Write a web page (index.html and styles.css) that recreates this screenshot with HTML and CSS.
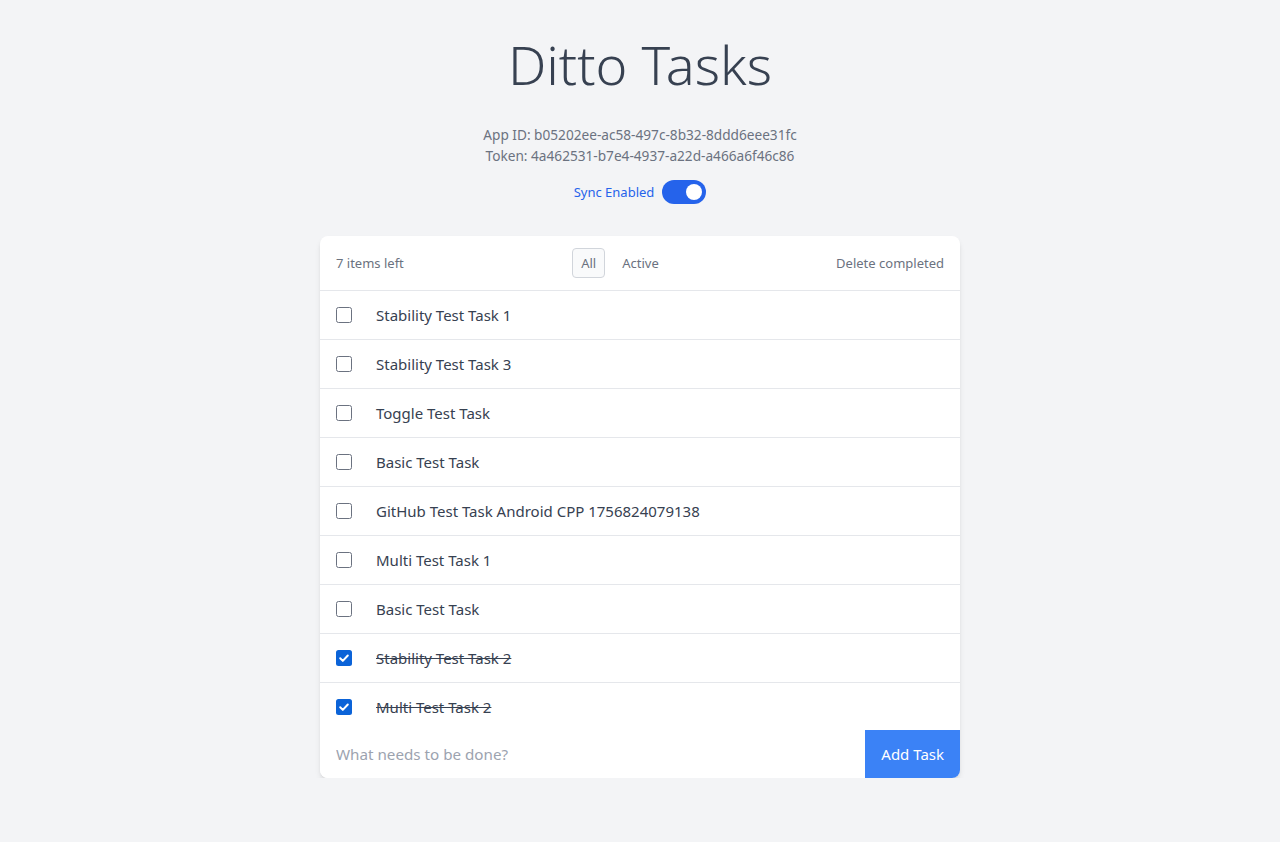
FILE: index.html
```html
<!DOCTYPE html>
<html lang="en">
<head>
<meta charset="utf-8">
<title>Ditto Tasks</title>
<link rel="stylesheet" href="styles.css">
</head>
<body>
<main class="page">
  <h1 class="title">Ditto Tasks</h1>
  <div class="creds">
    <div>App ID: b05202ee-ac58-497c-8b32-8ddd6eee31fc</div>
    <div>Token: 4a462531-b7e4-4937-a22d-a466a6f46c86</div>
  </div>
  <div class="sync">
    <span class="sync-label">Sync Enabled</span>
    <span class="toggle"><span class="knob"></span></span>
  </div>
  <section class="card">
    <header class="card-head">
      <span class="count">7 items left</span>
      <div class="filters">
        <button class="filter active">All</button>
        <button class="filter">Active</button>
      </div>
      <button class="clear">Delete completed</button>
    </header>
    <ul class="list">
      <li class="row"><span class="cb"></span><span class="label">Stability Test Task 1</span></li>
      <li class="row"><span class="cb"></span><span class="label">Stability Test Task 3</span></li>
      <li class="row"><span class="cb"></span><span class="label">Toggle Test Task</span></li>
      <li class="row"><span class="cb"></span><span class="label">Basic Test Task</span></li>
      <li class="row"><span class="cb"></span><span class="label">GitHub Test Task Android CPP 1756824079138</span></li>
      <li class="row"><span class="cb"></span><span class="label">Multi Test Task 1</span></li>
      <li class="row"><span class="cb"></span><span class="label">Basic Test Task</span></li>
      <li class="row done"><span class="cb checked"><svg viewBox="0 0 16 16" width="16" height="16"><path d="M4.2 8.3l2.6 2.6 5-5.4" fill="none" stroke="#fff" stroke-width="2" stroke-linecap="round" stroke-linejoin="round"/></svg></span><span class="label">Stability Test Task 2</span></li>
      <li class="row done"><span class="cb checked"><svg viewBox="0 0 16 16" width="16" height="16"><path d="M4.2 8.3l2.6 2.6 5-5.4" fill="none" stroke="#fff" stroke-width="2" stroke-linecap="round" stroke-linejoin="round"/></svg></span><span class="label">Multi Test Task 2</span></li>
    </ul>
    <form class="add">
      <input class="add-input" type="text" placeholder="What needs to be done?">
      <button class="add-btn" type="button">Add Task</button>
    </form>
  </section>
</main>
</body>
</html>
```

FILE: styles.css
```css
* { box-sizing: border-box; }
html, body { margin: 0; padding: 0; }
body {
  background: #f3f4f6;
  font-family: "Noto Sans", "Open Sans", sans-serif;
  color: #374151;
}
.page {
  display: flex;
  flex-direction: column;
  align-items: center;
  padding-top: 32px;
}
.title {
  margin: 0;
  font-size: 54px;
  line-height: 64px;
  font-weight: 300;
  color: #374151;
}
.creds {
  margin-top: 28px;
  font-size: 13.65px;
  line-height: 21px;
  color: #6b7280;
  text-align: center;
}
.sync {
  margin-top: 14px;
  display: flex;
  align-items: center;
  gap: 8px;
}
.sync-label {
  font-size: 13px;
  color: #2563eb;
}
.toggle {
  width: 44px;
  height: 24px;
  border-radius: 12px;
  background: #2563eb;
  display: flex;
  align-items: center;
  justify-content: flex-end;
  padding: 0 4px;
}
.knob {
  width: 16px;
  height: 16px;
  border-radius: 50%;
  background: #fff;
}
.card {
  margin-top: 32px;
  width: 640px;
  background: #fff;
  border-radius: 8px;
  box-shadow: 0 4px 6px -1px rgba(0,0,0,0.1), 0 2px 4px -2px rgba(0,0,0,0.1);
  overflow: hidden;
}
.card-head {
  display: flex;
  justify-content: space-between;
  align-items: center;
  padding: 12px 16px;
  border-bottom: 1px solid #e5e7eb;
  font-size: 13px;
  color: #6b7280;
}
.filters { display: flex; gap: 8px; }
button {
  font-family: inherit;
  font-size: 13px;
  line-height: 20px;
  background: none;
  border: 1px solid transparent;
  color: #6b7280;
  padding: 4px 8px;
  border-radius: 4px;
  cursor: pointer;
}
.filter.active { border-color: #d1d5db; background: #f9fafb; }
.clear { padding: 0; border: 0; }
.list {
  list-style: none;
  margin: 0;
  padding: 0;
  height: 439px;
  overflow: hidden;
}
.row {
  display: flex;
  align-items: center;
  gap: 24px;
  padding: 12px 16px;
  border-bottom: 1px solid #e5e7eb;
  font-size: 15px;
  line-height: 24px;
  color: #374151;
}
.cb {
  width: 16px;
  height: 16px;
  border: 1.5px solid #6b7280;
  border-radius: 2.5px;
  flex: none;
  display: flex;
}
.cb.checked {
  border: 0;
  background: #0b63d8;
}
.done .label { text-decoration: line-through; }
.add {
  display: flex;
  margin: 0;
  height: 48px;
}
.add-input {
  flex: 1;
  border: 0;
  outline: 0;
  padding: 0 16px;
  font-family: inherit;
  font-size: 15.2px;
  color: #374151;
}
.add-input::placeholder { color: #9ca3af; }
.add-btn {
  background: #3b82f6;
  color: #fff;
  font-size: 15px;
  padding: 0 16px;
  border: 0;
  border-radius: 0;
}
```
